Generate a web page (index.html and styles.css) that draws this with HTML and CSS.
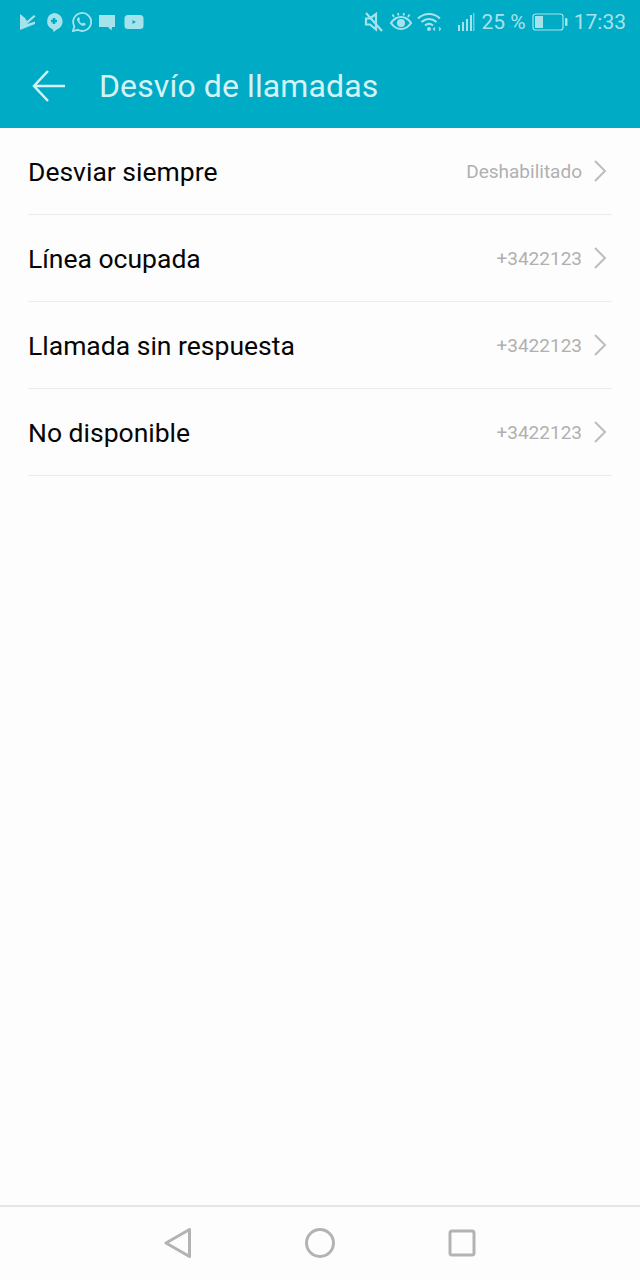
FILE: index.html
```html
<!DOCTYPE html>
<html lang="es">
<head>
    <meta charset="UTF-8">
    <meta name="viewport" content="width=device-width, initial-scale=1.0">
    <title>Desvío de llamadas</title>
    <link rel="stylesheet" href="styles.css">
</head>
<body>
    <header class="app-header">
        <div class="status-bar">
            <div class="status-icons">
                <svg class="icon-check" width="18" height="18" viewBox="0 0 18 18"><path class="soft" d="M1 1l5 4 2 3 7-6 1.500 1.500L8 11l8-2.500V11L1 17z"/></svg>
                <svg width="20" height="22" viewBox="0 0 20 22"><path class="soft" d="M10 2a8.500 8.500 0 0 1 3 16.500L9.500 21l-.5-2.600A8.500 8.500 0 0 1 10 2z"/><path class="plus" d="M10 7v6M7 10h6"/></svg>
                <svg width="22" height="22" viewBox="0 0 22 22"><path class="ring" d="M3 20l1.300-4.700A9 9 0 1 1 7.800 18.800z"/><path class="phone" d="M8 6.500c-1.500 1-1.300 3 .5 5.200s4 3.600 5.700 3c1.200-.4 1.600-1.400 1.500-2l-2.300-1.200-1 1.100c-1.300-.5-2.600-1.900-3.200-3.200l.9-1-1-2.200z"/></svg>
                <svg width="18" height="18" viewBox="0 0 18 18"><path class="soft" d="M1 2h16v12h-3l-.5 3.500L10 14H1z"/></svg>
                <svg class="icon-video" width="20" height="16" viewBox="0 0 20 16"><rect class="soft" x="0.500" y="1" width="19" height="14" rx="3.500"/><path class="cut-fill" d="M8.500 6l3.500 2-3.500 2z"/></svg>
            </div>
            <div class="status-right">
                <svg class="mute" width="20" height="22" viewBox="0 0 20 22"><path class="line bold" d="M7 7.500H3v6h4l6 5V3z"/><path class="line bold" d="M3 2l16 18"/></svg>
                <svg class="eye" width="24" height="22" viewBox="0 0 24 22"><path class="line bold" d="M2 12c3-4.500 6-6 10-6s7 1.500 10 6c-3 4.500-6 6-10 6s-7-1.500-10-6z"/><circle class="soft" cx="12" cy="12" r="4"/><path class="line" d="M5 6L3.500 3.500M9.500 4.500L9 2M14.500 4.500L15 2M19 6l1.500-2.500"/></svg>
                <svg class="wifi" width="26" height="20" viewBox="0 0 26 20"><path class="line bold" d="M1 6.500c6.500-6 15.500-6 22 0M4.500 10c4.500-4 10.500-4 15 0M8 13.500c2.500-2 5.500-2 8 0"/><circle class="soft" cx="12" cy="17" r="2"/><path class="line thin" d="M18 15.500l-1.500 1.500 1.500 1.500M22 15.500l1.500 1.500-1.500 1.500"/></svg>
                <svg class="signal" width="20" height="20" viewBox="0 0 20 20"><path class="soft" d="M2 13h2v6H2zM6 10h2v9H6zM10 7h2v12h-2zM14 3h2v16h-2z"/><path class="dim" d="M17 1h1.500v18H17z"/></svg>
                <span class="battery-pct">25 %</span>
                <svg class="battery" width="36" height="18" viewBox="0 0 36 18"><rect class="line thin" x="1" y="1" width="30" height="16" rx="2.500"/><rect class="soft" x="3" y="3" width="8" height="12"/><rect class="soft" x="33" y="5" width="2.500" height="8" rx="1"/></svg>
                <span class="clock">17:33</span>
            </div>
        </div>
        <div class="toolbar">
            <svg class="back-arrow" width="36" height="34" viewBox="0 0 36 34"><path d="M2 17h31M16 2L2 17l14 15"/></svg>
            <h1>Desvío de llamadas</h1>
        </div>
    </header>

    <main class="settings-list">
        <div class="settings-row">
            <span class="row-label">Desviar siempre</span>
            <span class="row-value">Deshabilitado</span>
            <svg class="chevron" width="14" height="22" viewBox="0 0 14 22"><path d="M2 1l10 10L2 21"/></svg>
        </div>
        <div class="settings-row">
            <span class="row-label">Línea ocupada</span>
            <span class="row-value">+3422123</span>
            <svg class="chevron" width="14" height="22" viewBox="0 0 14 22"><path d="M2 1l10 10L2 21"/></svg>
        </div>
        <div class="settings-row">
            <span class="row-label">Llamada sin respuesta</span>
            <span class="row-value">+3422123</span>
            <svg class="chevron" width="14" height="22" viewBox="0 0 14 22"><path d="M2 1l10 10L2 21"/></svg>
        </div>
        <div class="settings-row">
            <span class="row-label">No disponible</span>
            <span class="row-value">+3422123</span>
            <svg class="chevron" width="14" height="22" viewBox="0 0 14 22"><path d="M2 1l10 10L2 21"/></svg>
        </div>
    </main>

    <nav class="nav-bar">
        <svg width="28" height="32" viewBox="0 0 28 32"><path d="M25.500 2.500v27L2 16z"/></svg>
        <svg width="30" height="30" viewBox="0 0 30 30"><circle cx="15" cy="15" r="13.500"/></svg>
        <svg width="28" height="28" viewBox="0 0 28 28"><rect x="2" y="2" width="24" height="24" rx="2"/></svg>
    </nav>
</body>
</html>
```

FILE: styles.css
```css
:root {
    --teal: #00abc5;
    --status-color: #a5e3ec;
    --header-text: #d5f3f7;
    --row-line: #ececec;
    --muted: #b0b0b0;
}

html, body {
    height: 100%;
}

body {
    margin: 0;
    font-family: Roboto, "Noto Sans", sans-serif;
    background-color: #fdfdfd;
    color: #050505;
    display: flex;
    flex-direction: column;
}

.app-header {
    height: 128px;
    background-color: var(--teal);
    flex-shrink: 0;
}

.status-bar {
    height: 44px;
    display: flex;
    justify-content: space-between;
    align-items: center;
    padding: 0 14px 0 19px;
    color: var(--status-color);
}

.status-icons, .status-right {
    display: flex;
    align-items: center;
}

.status-icons {
    gap: 6px;
}

.status-icons svg {
    flex-shrink: 0;
}

.icon-check {
    margin-right: 1px;
}

.icon-video {
    margin-left: 2px;
}

.mute {
    margin-right: 6px;
}

.eye {
    margin-right: 4px;
}

.wifi {
    margin-right: 13px;
}

.signal {
    margin-right: 6px;
}

.battery {
    margin-left: 6px;
    margin-right: 6px;
}

.soft {
    fill: var(--status-color);
}

.dim {
    fill: #6fcbd9;
}

.cut-fill {
    fill: var(--teal);
}

.plus {
    fill: none;
    stroke: var(--teal);
    stroke-width: 2.500;
}

.ring {
    fill: none;
    stroke: var(--status-color);
    stroke-width: 1.800;
}

.phone {
    fill: var(--status-color);
}

.line {
    fill: none;
    stroke: var(--status-color);
    stroke-width: 1.800;
}

.line.bold {
    stroke-width: 2.200;
}

.line.thin {
    stroke-width: 1.200;
}

.battery-pct, .clock {
    font-size: 21px;
    line-height: 24px;
}

.toolbar {
    height: 84px;
    display: flex;
    align-items: center;
    padding-left: 32px;
    box-sizing: border-box;
}

.back-arrow {
    fill: none;
    stroke: var(--header-text);
    stroke-width: 2.500;
    margin-right: 31px;
}

h1 {
    margin: 0;
    font-size: 32px;
    font-weight: 400;
    letter-spacing: 0.1px;
    color: var(--header-text);
}

.settings-list {
    flex: 1;
    padding: 0 28px;
}

.settings-row {
    height: 87px;
    box-sizing: border-box;
    display: flex;
    align-items: center;
    border-bottom: 1px solid var(--row-line);
}

.row-label {
    flex: 1;
    font-size: 26.500px;
}

.row-value {
    font-size: 19px;
    color: var(--muted);
    margin-right: 11px;
}

.chevron {
    fill: none;
    stroke: #bdbdbd;
    stroke-width: 2;
    margin-right: 5px;
}

.nav-bar {
    height: 75px;
    flex-shrink: 0;
    box-sizing: border-box;
    border-top: 2px solid #e6e6e6;
    padding-bottom: 2px;
    display: grid;
    grid-template-columns: repeat(3, 142px);
    align-items: center;
    justify-items: center;
    justify-content: center;
}

.nav-bar svg {
    fill: none;
    stroke: #b3b3b3;
    stroke-width: 3;
    stroke-linejoin: round;
}
```
